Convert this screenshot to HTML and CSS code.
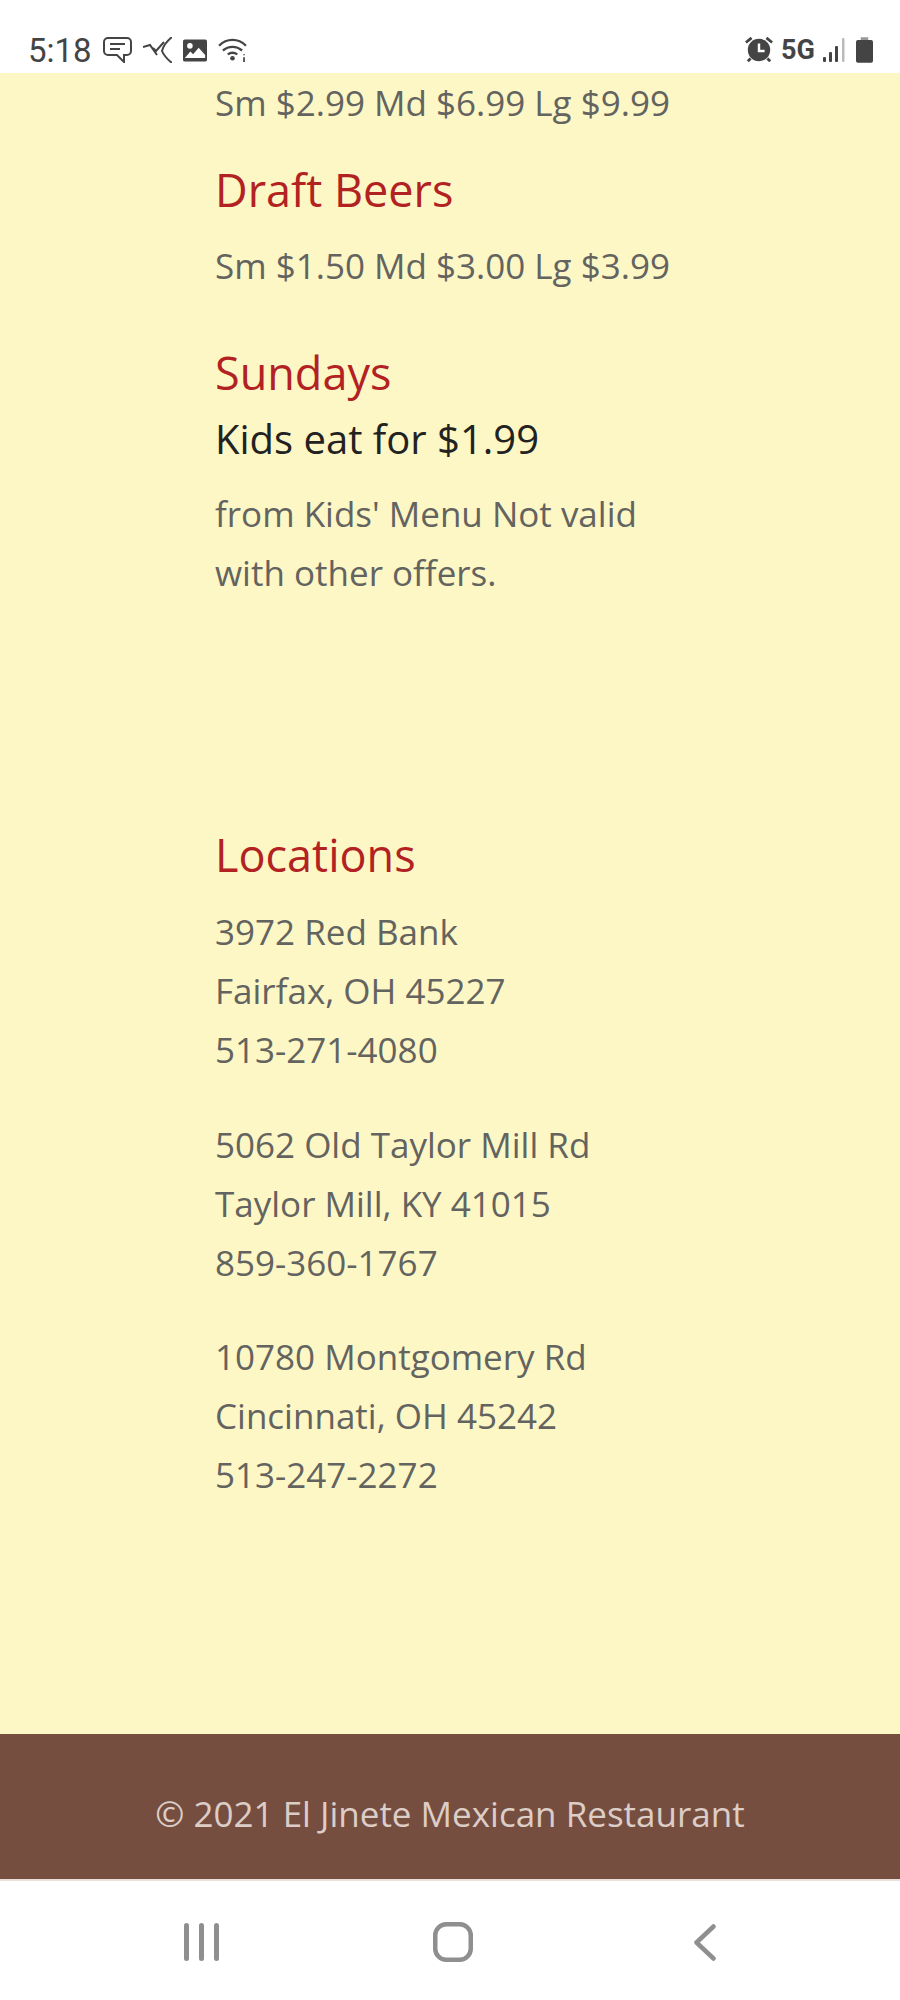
FILE: index.html
```html
<!DOCTYPE html>
<html lang="en">
<head>
    <meta charset="UTF-8">
    <meta name="viewport" content="width=device-width, initial-scale=1.0">
    <title>El Jinete Mexican Restaurant</title>
    <link rel="stylesheet" href="styles.css">
</head>
<body>
    <div class="status-bar">
        <div class="status-left">
            <span class="clock">5:18</span>
            <svg class="icon" width="29" height="26" viewBox="0 0 29 26" fill="none" stroke="#444" stroke-width="2">
                <path d="M5 1h19a4 4 0 0 1 4 4v9a4 4 0 0 1-4 4h-3v7l-7-7H5a4 4 0 0 1-4-4V5a4 4 0 0 1 4-4z"/>
                <path d="M7 7h15M7 12h10"/>
            </svg>
            <svg class="icon" width="29" height="26" viewBox="0 0 29 26" fill="none" stroke="#444" stroke-width="2">
                <path d="M0 10l7-2 7 10"/>
                <path d="M10 11l3 3 8-9"/>
                <path d="M29 0C24 4 20 10 19 14c2 5 5 8 10 12"/>
            </svg>
            <svg class="icon" width="24" height="23" viewBox="0 0 26 24">
                <rect width="26" height="24" rx="2" fill="#444"/>
                <circle cx="7.500" cy="7" r="3" fill="#fff"/>
                <path d="M2 20l6-7 3 3 6-7 7 8v3H2z" fill="#fff"/>
            </svg>
            <svg class="icon" width="29" height="25" viewBox="0 0 30 26" fill="none" stroke="#444" stroke-width="2.400">
                <path d="M1 8c8-8 20-8 28 0M5 13c6-5 14-5 20 0M10 17c3-2 7-2 10 0"/>
                <circle cx="15" cy="21" r="2.400" fill="#444" stroke="none"/>
                <path d="M27 17v1M27 20v5" stroke-width="1.800"/>
            </svg>
        </div>
        <div class="status-right">
            <svg class="icon" width="28" height="28" viewBox="0 0 30 30">
                <path d="M1 7l6-5M29 7l-6-5" stroke="#444" stroke-width="3" fill="none"/>
                <path d="M6 24l-3 3M24 24l3 3" stroke="#444" stroke-width="3" fill="none"/>
                <circle cx="15" cy="15" r="12" fill="#444"/>
                <path d="M15 8v8h6" stroke="#fff" stroke-width="2.600" fill="none"/>
            </svg>
            <span class="net">5G</span>
            <svg class="icon signal" width="22" height="26" viewBox="0 0 22 26">
                <rect x="0" y="20" width="3" height="5" rx="1" fill="#444"/>
                <rect x="6" y="15" width="3" height="10" rx="1" fill="#444"/>
                <rect x="12" y="9" width="3" height="16" rx="1" fill="#444"/>
                <rect x="19" y="1" width="2.500" height="24" rx="1" fill="#bbb"/>
            </svg>
            <svg class="icon battery" width="17" height="26" viewBox="0 0 18 27">
                <rect x="5" y="0" width="8" height="3" fill="#999"/>
                <rect x="0" y="3" width="18" height="24" rx="2" fill="#444"/>
            </svg>
        </div>
    </div>

    <main class="content">
        <p class="price first">Sm $2.99 Md $6.99 Lg $9.99</p>
        <h3 class="title beers">Draft Beers</h3>
        <p class="price">Sm $1.50 Md $3.00 Lg $3.99</p>

        <h3 class="title sundays">Sundays</h3>
        <h4 class="subtitle">Kids eat for $1.99</h4>
        <p class="text">from Kids' Menu Not valid<br>with other offers.</p>

        <h3 class="title locations">Locations</h3>
        <p class="text address">3972 Red Bank<br>Fairfax, OH 45227<br>513-271-4080</p>
        <p class="text address">5062 Old Taylor Mill Rd<br>Taylor Mill, KY 41015<br>859-360-1767</p>
        <p class="text address">10780 Montgomery Rd<br>Cincinnati, OH 45242<br>513-247-2272</p>
    </main>

    <footer class="site-footer">
        <p>&copy; 2021 El Jinete Mexican Restaurant</p>
    </footer>

    <nav class="nav-bar">
        <svg width="35" height="38" viewBox="0 0 35 38" fill="#8f8f8f">
            <rect x="0" y="0" width="5" height="38" rx="2.500"/>
            <rect x="15" y="0" width="5" height="38" rx="2.500"/>
            <rect x="30" y="0" width="5" height="38" rx="2.500"/>
        </svg>
        <svg class="nav-home" width="40" height="40" viewBox="0 0 40 40" fill="none" stroke="#8f8f8f" stroke-width="4.500">
            <rect x="2.250" y="2.250" width="35.500" height="35.500" rx="11"/>
        </svg>
        <svg class="nav-back" width="22" height="37" viewBox="0 0 22 37" fill="none" stroke="#8f8f8f" stroke-width="4.500" stroke-linecap="round" stroke-linejoin="round">
            <path d="M19.500 2.500L2.500 18.500l17 16"/>
        </svg>
    </nav>
</body>
</html>
```

FILE: styles.css
```css
body {
    margin: 0;
    font-family: 'Open Sans', sans-serif;
    background-color: #ffffff;
    width: 900px;
}
p, h3, h4 {
    margin: 0;
    font-weight: 400;
}
.status-bar {
    height: 73px;
    box-sizing: border-box;
    padding: 33px 27px 0 28px;
    display: flex;
    justify-content: space-between;
    align-items: flex-start;
    background-color: #ffffff;
}
.status-left, .status-right {
    display: flex;
    align-items: center;
    height: 34px;
}
.status-left {
    gap: 11px;
}
.status-right {
    gap: 8px;
}
.clock {
    font-family: 'Roboto', sans-serif;
    font-size: 33px;
    line-height: 36px;
    padding-top: 2px;
    color: #444;
}
.net {
    font-family: 'Roboto', sans-serif;
    font-weight: 700;
    font-size: 27px;
    color: #444;
}
.battery {
    margin-left: 3px;
}
.content {
    background-color: #fdf7c5;
    height: 1661px;
    box-sizing: border-box;
    padding: 0 215px;
    color: #636360;
    font-size: 35px;
    line-height: 59px;
    white-space: nowrap;
}
.title {
    color: #b22222;
    font-size: 45px;
    line-height: 60px;
}
.subtitle {
    color: #222;
    font-size: 40px;
    line-height: 60px;
    margin-top: 6px;
}
.beers {
    margin-top: 28px;
}
.price {
    margin-top: 16px;
}
.price.first {
    margin-top: 0;
}
.sundays {
    margin-top: 48px;
}
.text {
    margin-top: 15px;
}
.locations {
    margin-top: 223px;
}
.address {
    margin-top: 35.5px;
}
.locations + .address {
    margin-top: 17px;
}
.site-footer {
    background-color: #754e40;
    height: 145px;
    border-bottom: 2px solid #e9dfdb;
    display: flex;
    align-items: center;
    justify-content: center;
    color: #ddcdc7;
    font-size: 35px;
}
.site-footer p {
    margin-top: 14px;
}
.nav-bar {
    height: 119px;
    box-sizing: border-box;
    padding: 3px 184px 0 184px;
    background-color: #ffffff;
    display: flex;
    align-items: center;
}
.nav-home {
    margin-left: 214px;
}
.nav-back {
    margin-left: 221px;
}
```
